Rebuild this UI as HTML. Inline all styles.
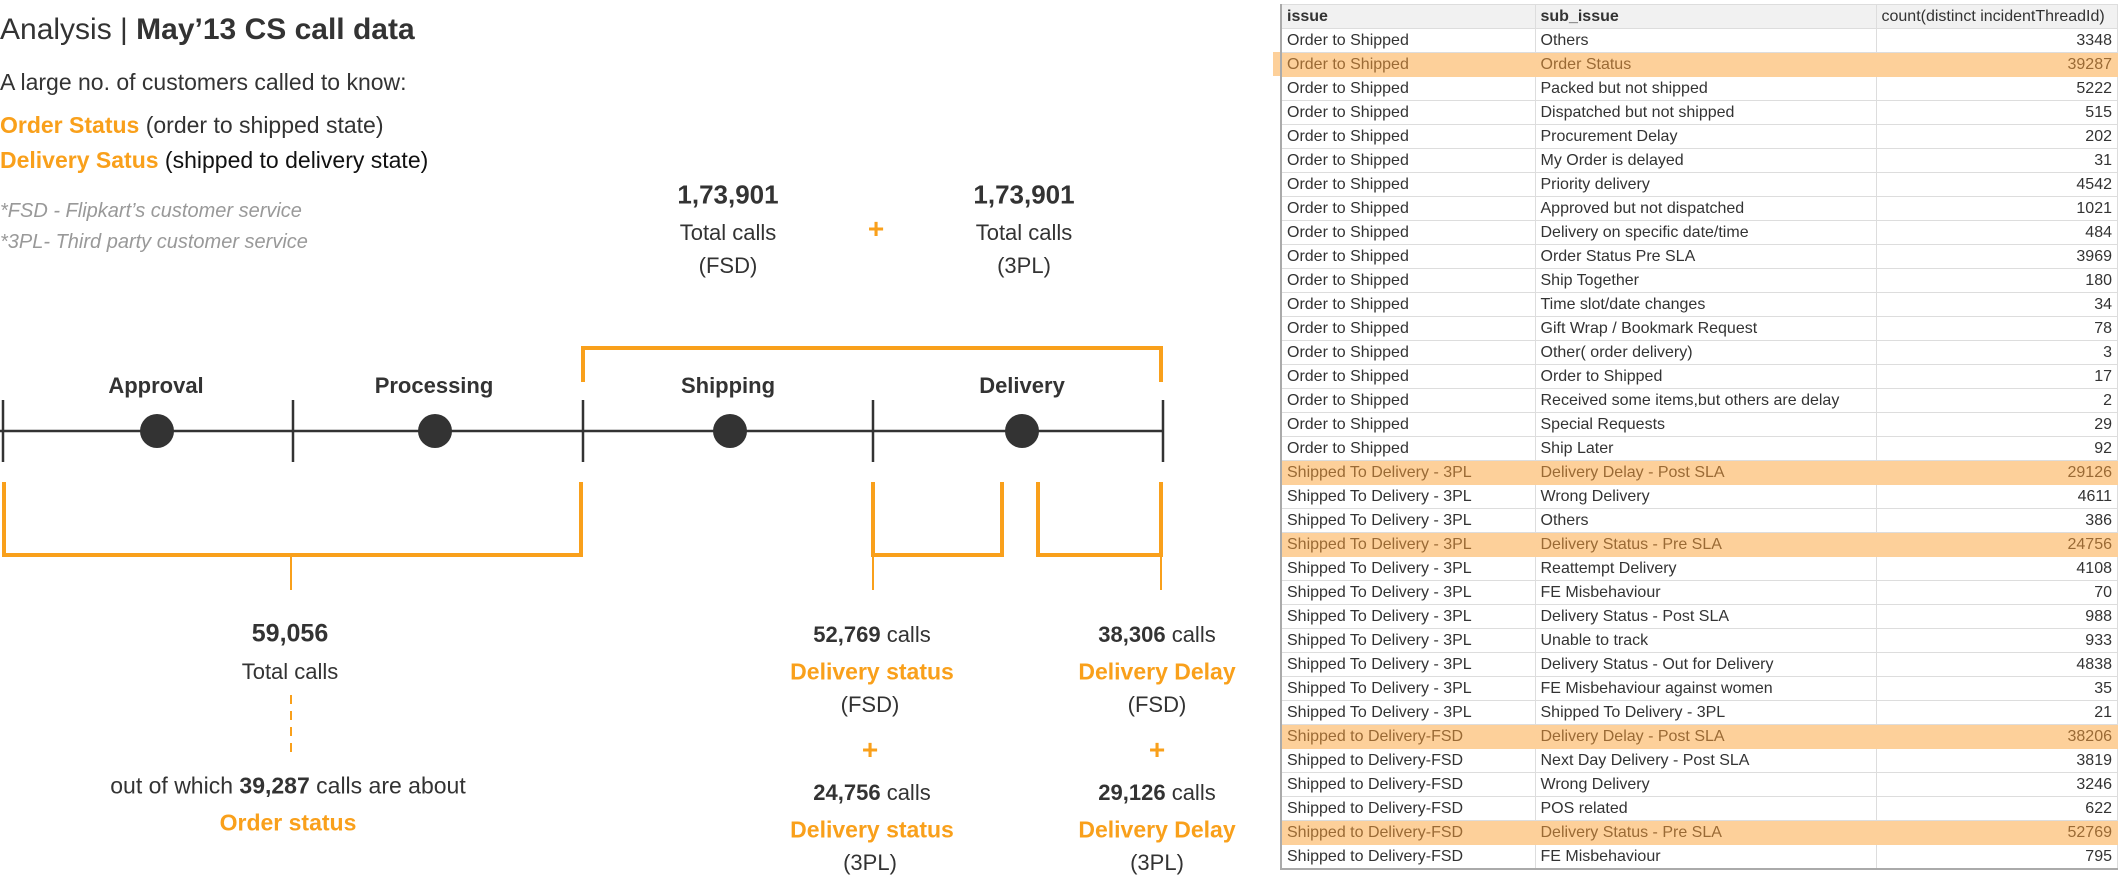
<!DOCTYPE html>
<html><head><meta charset="utf-8"><style>
body{margin:0;width:2122px;height:876px;background:#fff;position:relative;overflow:hidden;font-family:"Liberation Sans",sans-serif;color:#333}
.a{position:absolute;white-space:nowrap}
.c{position:absolute;white-space:nowrap;transform:translate(-50%,-50%);text-align:center}
.o{color:#f9a01b;font-weight:bold}
.b{font-weight:bold}
table{position:absolute;left:1280px;top:4px;border-collapse:collapse;table-layout:fixed;font-size:16px;width:838px;border-left:2px solid #aaa;border-bottom:2px solid #aaa}
td{height:23px;padding:0 5px;border:1px solid #ddd;line-height:23px;white-space:nowrap;overflow:hidden;color:#333}
td:nth-child(3){text-align:right}
tr.h td{background:#f1f1f1;height:23px}
tr.hl td{background:#fdd09a;color:#9a6a35;border-color:#fdd09a}
</style></head><body>
<div class="a" style="left:0;top:13px;font-size:30px">Analysis | <b>May’13 CS call data</b></div>
<div class="a" style="left:0;top:69px;font-size:23px">A large no. of customers called to know:</div>
<div class="a" style="left:0;top:112px;font-size:23px"><span class="o">Order Status</span> (order to shipped state)</div>
<div class="a" style="left:0;top:147px;font-size:23px;color:#111"><span class="o">Delivery Satus</span> (shipped to delivery state)</div>
<div class="a" style="left:0;top:200px;font-size:20px;font-style:italic;color:#999">*FSD - Flipkart’s customer service</div>
<div class="a" style="left:0;top:231px;font-size:20px;font-style:italic;color:#999">*3PL- Third party customer service</div>

<div class="c b" style="left:728px;top:195px;font-size:26px">1,73,901</div>
<div class="c" style="left:728px;top:233px;font-size:22px">Total calls</div>
<div class="c" style="left:728px;top:266px;font-size:22px">(FSD)</div>
<div class="c o" style="left:876px;top:229px;font-size:28px">+</div>
<div class="c b" style="left:1024px;top:195px;font-size:26px">1,73,901</div>
<div class="c" style="left:1024px;top:233px;font-size:22px">Total calls</div>
<div class="c" style="left:1024px;top:266px;font-size:22px">(3PL)</div>

<div class="c b" style="left:156px;top:386px;font-size:22px">Approval</div>
<div class="c b" style="left:434px;top:386px;font-size:22px">Processing</div>
<div class="c b" style="left:728px;top:386px;font-size:22px">Shipping</div>
<div class="c b" style="left:1022px;top:386px;font-size:22px">Delivery</div>

<svg class="a" style="left:0;top:0" width="1200" height="876">
<g stroke="#333" stroke-width="2.5" fill="none">
<line x1="0" y1="431" x2="1164" y2="431"/>
<line x1="3" y1="400" x2="3" y2="462"/><line x1="293" y1="400" x2="293" y2="462"/><line x1="583" y1="400" x2="583" y2="462"/><line x1="873" y1="400" x2="873" y2="462"/><line x1="1163" y1="400" x2="1163" y2="462"/>
</g>
<g fill="#333"><circle cx="157" cy="431" r="17"/><circle cx="435" cy="431" r="17"/><circle cx="730" cy="431" r="17"/><circle cx="1022" cy="431" r="17"/></g>
<g stroke="#f9a01b" stroke-width="4" fill="none">
<polyline points="583,382 583,348 1161,348 1161,382"/>
<polyline points="4,482 4,555 581,555 581,482"/>
<polyline points="873,482 873,555 1002,555 1002,482"/>
<polyline points="1038,482 1038,555 1161,555 1161,482"/>
</g>
<g stroke="#f9a01b" stroke-width="2" fill="none">
<line x1="291" y1="556" x2="291" y2="590"/>
<line x1="873" y1="556" x2="873" y2="590"/>
<line x1="1161" y1="556" x2="1161" y2="590"/>
<line x1="291" y1="695" x2="291" y2="752" stroke-dasharray="9,7"/>
</g>
</svg>

<div class="c b" style="left:290px;top:634px;font-size:25px">59,056</div>
<div class="c" style="left:290px;top:672px;font-size:22px">Total calls</div>
<div class="c" style="left:288px;top:786px;font-size:23px">out of which <b>39,287</b> calls are about</div>
<div class="c o" style="left:288px;top:823px;font-size:23px">Order status</div>

<div class="c" style="left:872px;top:635px;font-size:22px"><b>52,769</b> calls</div>
<div class="c o" style="left:872px;top:672px;font-size:23px">Delivery status</div>
<div class="c" style="left:870px;top:705px;font-size:22px">(FSD)</div>
<div class="c o" style="left:870px;top:750px;font-size:28px">+</div>
<div class="c" style="left:872px;top:793px;font-size:22px"><b>24,756</b> calls</div>
<div class="c o" style="left:872px;top:830px;font-size:23px">Delivery status</div>
<div class="c" style="left:870px;top:863px;font-size:22px">(3PL)</div>

<div class="c" style="left:1157px;top:635px;font-size:22px"><b>38,306</b> calls</div>
<div class="c o" style="left:1157px;top:672px;font-size:23px">Delivery Delay</div>
<div class="c" style="left:1157px;top:705px;font-size:22px">(FSD)</div>
<div class="c o" style="left:1157px;top:750px;font-size:28px">+</div>
<div class="c" style="left:1157px;top:793px;font-size:22px"><b>29,126</b> calls</div>
<div class="c o" style="left:1157px;top:830px;font-size:23px">Delivery Delay</div>
<div class="c" style="left:1157px;top:863px;font-size:22px">(3PL)</div>

<div class="a" style="left:1273px;top:52px;width:845px;height:24px;background:#fdd09a"></div>

<table>
<colgroup><col style="width:254px"><col style="width:341px"><col></colgroup>
<tr class="h"><td class="b">issue</td><td class="b">sub_issue</td><td style="text-align:left">count(distinct incidentThreadId)</td></tr>
<tr><td>Order to Shipped</td><td>Others</td><td>3348</td></tr>
<tr class="hl"><td>Order to Shipped</td><td>Order Status</td><td>39287</td></tr>
<tr><td>Order to Shipped</td><td>Packed but not shipped</td><td>5222</td></tr>
<tr><td>Order to Shipped</td><td>Dispatched but not shipped</td><td>515</td></tr>
<tr><td>Order to Shipped</td><td>Procurement Delay</td><td>202</td></tr>
<tr><td>Order to Shipped</td><td>My Order is delayed</td><td>31</td></tr>
<tr><td>Order to Shipped</td><td>Priority delivery</td><td>4542</td></tr>
<tr><td>Order to Shipped</td><td>Approved but not dispatched</td><td>1021</td></tr>
<tr><td>Order to Shipped</td><td>Delivery on specific date/time</td><td>484</td></tr>
<tr><td>Order to Shipped</td><td>Order Status Pre SLA</td><td>3969</td></tr>
<tr><td>Order to Shipped</td><td>Ship Together</td><td>180</td></tr>
<tr><td>Order to Shipped</td><td>Time slot/date changes</td><td>34</td></tr>
<tr><td>Order to Shipped</td><td>Gift Wrap / Bookmark Request</td><td>78</td></tr>
<tr><td>Order to Shipped</td><td>Other( order delivery)</td><td>3</td></tr>
<tr><td>Order to Shipped</td><td>Order to Shipped</td><td>17</td></tr>
<tr><td>Order to Shipped</td><td>Received some items,but others are delay</td><td>2</td></tr>
<tr><td>Order to Shipped</td><td>Special Requests</td><td>29</td></tr>
<tr><td>Order to Shipped</td><td>Ship Later</td><td>92</td></tr>
<tr class="hl"><td>Shipped To Delivery - 3PL</td><td>Delivery Delay - Post SLA</td><td>29126</td></tr>
<tr><td>Shipped To Delivery - 3PL</td><td>Wrong Delivery</td><td>4611</td></tr>
<tr><td>Shipped To Delivery - 3PL</td><td>Others</td><td>386</td></tr>
<tr class="hl"><td>Shipped To Delivery - 3PL</td><td>Delivery Status - Pre SLA</td><td>24756</td></tr>
<tr><td>Shipped To Delivery - 3PL</td><td>Reattempt Delivery</td><td>4108</td></tr>
<tr><td>Shipped To Delivery - 3PL</td><td>FE Misbehaviour</td><td>70</td></tr>
<tr><td>Shipped To Delivery - 3PL</td><td>Delivery Status - Post SLA</td><td>988</td></tr>
<tr><td>Shipped To Delivery - 3PL</td><td>Unable to track</td><td>933</td></tr>
<tr><td>Shipped To Delivery - 3PL</td><td>Delivery Status - Out for Delivery</td><td>4838</td></tr>
<tr><td>Shipped To Delivery - 3PL</td><td>FE Misbehaviour against women</td><td>35</td></tr>
<tr><td>Shipped To Delivery - 3PL</td><td>Shipped To Delivery - 3PL</td><td>21</td></tr>
<tr class="hl"><td>Shipped to Delivery-FSD</td><td>Delivery Delay - Post SLA</td><td>38206</td></tr>
<tr><td>Shipped to Delivery-FSD</td><td>Next Day Delivery - Post SLA</td><td>3819</td></tr>
<tr><td>Shipped to Delivery-FSD</td><td>Wrong Delivery</td><td>3246</td></tr>
<tr><td>Shipped to Delivery-FSD</td><td>POS related</td><td>622</td></tr>
<tr class="hl"><td>Shipped to Delivery-FSD</td><td>Delivery Status - Pre SLA</td><td>52769</td></tr>
<tr><td>Shipped to Delivery-FSD</td><td>FE Misbehaviour</td><td>795</td></tr>
</table>
</body></html>
